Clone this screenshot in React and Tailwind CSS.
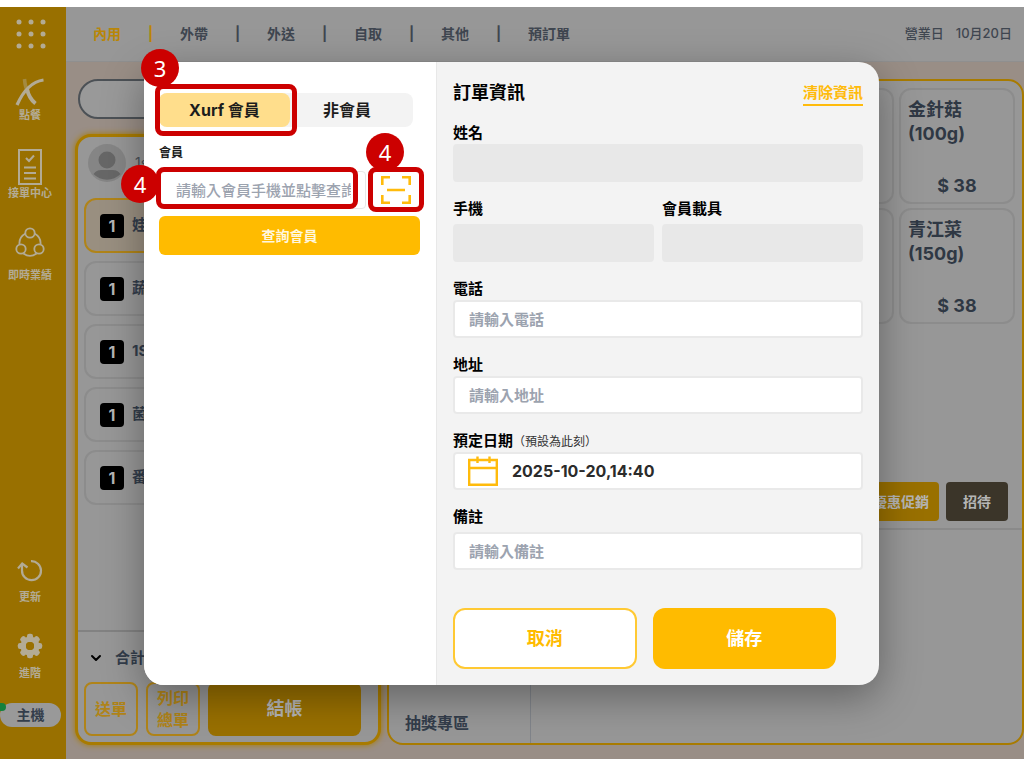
import { ChevronDown } from 'lucide-react';

const navItems = ['內用', '外帶', '外送', '自取', '其他', '預訂單'];

const cartItems = ['娃', '蔬', '1S', '菌', '番'];

const products = [
  { name: '金針菇', size: '(100g)', price: 38 },
  { name: '青江菜', size: '(150g)', price: 38 },
];

function DotsIcon() {
  const steps = [3, 15, 27];
  return (
    <svg width="30" height="30" viewBox="0 0 30 30" fill="#b3ab95">
      {steps.map((y) => steps.map((x) => <circle key={`${x}-${y}`} cx={x} cy={y} r="2.5" />))}
    </svg>
  );
}

function XLogo() {
  return (
    <svg width="30" height="30" viewBox="0 0 30 30" fill="none">
      <path d="M9.5 2C10 8 11 12 13 15" stroke="#a48a40" strokeWidth="3.6" />
      <path d="M12 12C13.500 19 16 23 20.500 26.500" stroke="#b3ab95" strokeWidth="3.800" />
      <path d="M2 28C6 19 14 5 28.500 3" stroke="#b3ab95" strokeWidth="3.200" />
    </svg>
  );
}

function ChecklistIcon() {
  return (
    <svg width="24" height="36" viewBox="0 0 24 36" fill="none" stroke="#b3ab95" strokeWidth="2">
      <rect x="1" y="1" width="22" height="34" />
      <path d="M8 9l3 3 5-5.500M6 18.500h12M6 24h12M6 29.500h12" />
    </svg>
  );
}

function PeopleIcon() {
  return (
    <svg width="30" height="30" viewBox="0 0 30 30" fill="none" stroke="#b3ab95" strokeWidth="1.8">
      <circle cx="15" cy="6" r="4.700" />
      <circle cx="6" cy="22" r="4.700" />
      <circle cx="24" cy="22" r="4.700" />
      <path d="M10.500 6.500C6 9 4 13 4.500 17.500M19.500 6.500C24 9 26 13 25.500 17.500M8.500 26.500C12.500 29.500 17.500 29.500 21.500 26.500" />
    </svg>
  );
}

function RefreshIcon() {
  return (
    <svg width="26" height="24" viewBox="0 0 26 24" fill="none" stroke="#b3ab95" strokeWidth="2.200">
      <path d="M14 2.200A9.500 9.500 0 1 1 5 11.500V5" />
      <path d="M1 9.500L5.200 4.500L10.500 8.500" />
    </svg>
  );
}

function GearIcon() {
  const teeth = [0, 45, 90, 135, 180, 225, 270, 315];
  return (
    <svg width="26" height="26" viewBox="0 0 26 26">
      <g fill="#b3ab95">
        {teeth.map((a) => (
          <rect key={a} x="10" y="0.800" width="6" height="7" rx="2.200" transform={`rotate(${a} 13 13)`} />
        ))}
      </g>
      <circle cx="13" cy="13" r="6.800" fill="none" stroke="#b3ab95" strokeWidth="5.500" />
      <circle cx="13" cy="13" r="4" fill="#997000" />
    </svg>
  );
}

function AvatarIcon() {
  return (
    <svg width="38" height="38" viewBox="0 0 38 38">
      <circle cx="19" cy="19" r="19" fill="#858585" />
      <circle cx="19" cy="16" r="8.500" fill="#676767" />
      <path d="M5.500 30C9 25 13 26 19 26s10-1 13.500 4A19 19 0 0 1 5.500 30z" fill="#676767" />
    </svg>
  );
}

function ScanIcon() {
  return (
    <svg width="30" height="28" viewBox="0 0 30 28" fill="none" stroke="#ffbb0c" strokeWidth="2.600">
      <path d="M1.300 9V1.300H9M21 1.300h7.700V9M28.700 19v7.700H21M9 26.700H1.300V19M6 14h18" />
    </svg>
  );
}

function CalendarIcon() {
  return (
    <svg width="30" height="30" viewBox="0 0 30 30" fill="none" stroke="#ffbb0c" strokeWidth="2.400">
      <path d="M1.200 4h27.600v24.800H1.200zM1.200 12h27.600M9.500 0.500v6.500M21.500 0.500v6.500" />
    </svg>
  );
}

function SideButton({ icon, label, gap = '' }) {
  return (
    <button className={'flex flex-col items-center text-[11px] leading-4 font-bold text-[#b3ab95] ' + gap}>
      {icon}
      <span>{label}</span>
    </button>
  );
}

function Sidebar() {
  return (
    <aside className="w-[66px] shrink-0 bg-[#997000] flex flex-col pt-3 pb-8">
      <button className="self-center mr-[5px]" aria-label="選單">
        <DotsIcon />
      </button>
      <nav className="mt-7 mr-[6px] flex flex-col items-center gap-[26px]">
        <SideButton icon={<XLogo />} label="點餐" />
        <SideButton icon={<ChecklistIcon />} label="接單中心" />
        <SideButton icon={<PeopleIcon />} label="即時業績" gap="gap-[10px]" />
      </nav>
      <div className="mt-auto mr-[6px] flex flex-col items-center gap-7">
        <SideButton icon={<RefreshIcon />} label="更新" gap="gap-[6px]" />
        <SideButton icon={<GearIcon />} label="進階" gap="gap-[6px]" />
      </div>
      <div className="relative mt-[22px] w-[61px] h-6 rounded-full bg-[#999] text-center text-sm leading-6 font-bold text-[#333d4b]">
        主機
        <span className="absolute left-0 top-0 w-[6px] h-2 rounded-r-full bg-[#15803d]"></span>
      </div>
    </aside>
  );
}

function TopBar() {
  return (
    <header className="h-[55px] shrink-0 bg-[#979797] border-b border-[#8f8f8f] flex items-center justify-between pl-[27px] pr-3 text-[#3f4650]">
      <nav className="flex items-center text-sm font-bold">
        {navItems.map((item, i) => (
          <div key={item} className="flex items-center">
            {i > 0 && <span className={i === 1 ? 'w-[59px] text-center text-[#b98608]' : 'w-[59px] text-center'}>|</span>}
            <button className={i === 0 ? 'text-[#b98608]' : ''}>{item}</button>
          </div>
        ))}
      </nav>
      <div className="flex gap-3 text-[13px] font-medium">
        <span>營業日</span>
        <span>10月20日</span>
      </div>
    </header>
  );
}

function OrderPanel() {
  return (
    <section className="w-[306px] shrink-0 flex flex-col">
      <input
        type="search"
        aria-label="搜尋"
        className="ml-[3px] h-[40px] rounded-full border-2 border-[#4c5156] bg-[#999]"
      />
      <div className="mt-[15px] flex-1 flex flex-col rounded-2xl border-[3px] border-[#a87b00] bg-[#979797] shadow-[0_0_6px_#a87b00]">
        <div className="flex items-center gap-[9px] pl-[10px] pt-[7px] text-sm text-[#4a4f57]">
          <AvatarIcon />
          <span>1s</span>
        </div>
        <ul className="mt-4 px-[6px] flex flex-col gap-2">
          {cartItems.map((item, i) => (
            <li
              key={item}
              className={
                'h-[55px] rounded-xl border-2 flex items-center gap-2 pl-[14px] text-[15px] font-bold text-[#333d4b] ' +
                (i === 0 ? 'border-[#b08419] bg-[#998f80]' : 'border-[#8c8c8c] bg-[#979797]')
              }
            >
              <span className="size-6 rounded bg-black text-center text-base leading-6 text-[#b5b5b5]">1</span>
              {item}
            </li>
          ))}
        </ul>
        <div className="mt-auto border-t-2 border-[#828282] px-[6px] pt-4 pb-[6px]">
          <div className="flex items-center gap-[11px] pl-1 text-[15px] leading-5 font-bold text-[#333d4b]">
            <ChevronDown size={16} strokeWidth={3} className="text-black" />
            合計
          </div>
          <div className="mt-[14px] flex gap-2 text-base font-bold text-[#b08419]">
            <button className="size-[54px] rounded-lg border-2 border-[#b08419]">送單</button>
            <button className="size-[54px] rounded-lg border-2 border-[#b08419] leading-[22px]">
              列印
              <br />
              總單
            </button>
            <button className="w-[153px] rounded-lg bg-[#997000] text-lg text-[#b5b5b5]">結帳</button>
          </div>
        </div>
      </div>
    </section>
  );
}

function MenuPanel() {
  return (
    <section className="flex-1 flex flex-col rounded-2xl border-2 border-[#a87b00] bg-[#979797]">
      <div className="flex justify-end gap-[5px] pt-[7px] pr-[7px]">
        <div className="w-[116px] flex flex-col gap-1">
          <div className="h-[116px] rounded-xl border-2 border-[#8c8c8c]"></div>
          <div className="h-[116px] rounded-xl border-2 border-[#8c8c8c]"></div>
        </div>
        <div className="w-[116px] flex flex-col gap-1">
          {products.map((p) => (
            <button
              key={p.name}
              className="h-[116px] rounded-xl border-2 border-[#8c8c8c] px-[7px] pt-2 pb-1 flex flex-col justify-between text-left text-lg leading-6 font-bold text-[#2f3844]"
            >
              <span>
                {p.name}
                <br />
                {p.size}
              </span>
              <span className="self-center">$ {p.price}</span>
            </button>
          ))}
        </div>
      </div>
      <div className="mt-auto flex justify-end gap-[7px] pr-[14px] pb-[7px] text-sm font-bold text-[#b5b5b5]">
        <button className="h-[39px] px-[10px] rounded bg-[#997000]">優惠促銷</button>
        <button className="h-[39px] w-[62px] rounded bg-[#3b3529]">招待</button>
      </div>
      <div className="h-[215px] border-t-2 border-[#8a8a8a] flex">
        <div className="w-[142px] border-r border-[#80848a] flex items-end pl-4 pb-2 text-base font-bold text-[#333d4b]">
          抽獎專區
        </div>
      </div>
    </section>
  );
}

// 步驟標示
function Step({ n, className }) {
  return (
    <span
      className={
        "absolute z-10 size-[38px] rounded-full bg-[#cc0000] text-center text-[22px] leading-[38px] font-normal text-white font-['Noto_Sans'] " +
        className
      }
    >
      {n}
    </span>
  );
}

function MemberPane() {
  return (
    <div className="w-[293px] shrink-0 bg-white rounded-l-[20px] border-r border-[#e8e8e8] pl-[15px] pr-4 pt-[31px]">
      <div className="w-[254px] h-[34px] rounded-lg bg-[#f3f3f3] flex text-base font-bold text-[#1c1c1c]">
        <div className="relative w-[131px]">
          <button className="size-full rounded-lg bg-[#ffde8c]">Xurf 會員</button>
          <span className="absolute -left-1 -right-[7px] -top-[9px] -bottom-[9px] rounded-lg border-[5px] border-[#cc0000]"></span>
          <Step n={3} className="-left-[18px] -top-[44px]" />
        </div>
        <button className="flex-1 pr-[9px]">非會員</button>
      </div>
      <label htmlFor="member" className="mt-4 block text-xs leading-5 font-bold text-[#1c1c1c]">
        會員
      </label>
      <div className="mt-2 flex justify-between">
        <div className="relative">
          <input
            id="member"
            placeholder="請輸入會員手機並點擊查詢"
            className="w-[207px] h-[38px] rounded border border-[#e8e8e8] pl-4 pr-[14px] text-[15px] font-medium placeholder:text-[#9ca3af]"
          />
          <span className="absolute -left-[3px] right-2 -top-1 bottom-0 rounded-lg border-[5px] border-[#cc0000]"></span>
          <Step n={4} className="-left-[38px] -top-[6px]" />
        </div>
        <div className="relative">
          <button aria-label="掃描" className="w-[48px] h-[38px] flex items-center justify-center">
            <ScanIcon />
          </button>
          <span className="absolute -left-1 -right-1 -top-1 -bottom-[3px] rounded-lg border-[5px] border-[#cc0000]"></span>
          <Step n={4} className="-left-[6px] -top-[38px]" />
        </div>
      </div>
      <button className="mt-[7px] w-full h-[39px] rounded-md bg-[#ffbb00] text-sm font-bold text-[#fff7df]">
        查詢會員
      </button>
    </div>
  );
}

const labelClass = 'block text-[15px] leading-[22px] font-bold text-black';
const inputClass =
  'block w-full h-[38px] rounded border-2 border-[#e9e9e9] bg-white px-[14px] text-[15px] font-bold placeholder:text-[#9ca3af]';
const disabledClass = 'block w-full h-[38px] rounded bg-[#e8e8e8]';

function OrderForm() {
  return (
    <form className="flex-1 min-w-0 px-4 pt-5 pb-4">
      <div className="flex items-start justify-between">
        <h2 className="text-lg leading-[22px] font-bold text-black">訂單資訊</h2>
        <button type="button" className="border-b-2 border-[#ffbb0c] text-[15px] leading-[22px] font-bold text-[#ffbb0c]">
          清除資訊
        </button>
      </div>
      <div className="mt-4 flex flex-col gap-4">
        <div>
          <label htmlFor="name" className={labelClass}>姓名</label>
          <input id="name" disabled className={disabledClass} />
        </div>
        <div className="grid grid-cols-2 gap-2">
          <div>
            <label htmlFor="mobile" className={labelClass}>手機</label>
            <input id="mobile" disabled className={'mt-1 ' + disabledClass} />
          </div>
          <div>
            <label htmlFor="carrier" className={labelClass}>會員載具</label>
            <input id="carrier" disabled className={'mt-1 ' + disabledClass} />
          </div>
        </div>
        <div>
          <label htmlFor="phone" className={labelClass}>電話</label>
          <input id="phone" placeholder="請輸入電話" className={inputClass} />
        </div>
        <div>
          <label htmlFor="address" className={labelClass}>地址</label>
          <input id="address" placeholder="請輸入地址" className={inputClass} />
        </div>
        <div>
          <label htmlFor="date" className={labelClass}>
            預定日期<span className="text-xs font-normal text-[#333]">（預設為此刻）</span>
          </label>
          <div className="h-[38px] rounded border-2 border-[#e9e9e9] bg-white flex items-center gap-[14px] pl-[13px]">
            <CalendarIcon />
            <input
              id="date"
              defaultValue="2025-10-20,14:40"
              className="flex-1 min-w-0 text-base font-bold text-[#2b2b2b]"
            />
          </div>
        </div>
        <div>
          <label htmlFor="note" className={labelClass}>備註</label>
          <input id="note" placeholder="請輸入備註" className={'mt-1 ' + inputClass} />
        </div>
      </div>
      <div className="mt-[38px] mr-[27px] grid grid-cols-2 gap-4 text-lg font-bold">
        <button type="button" className="h-[61px] rounded-xl border-2 border-[#ffc933] bg-white text-[#ffbb00]">
          取消
        </button>
        <button type="button" className="h-[61px] rounded-xl bg-[#ffbb00] text-white">
          儲存
        </button>
      </div>
    </form>
  );
}

export default function App() {
  return (
    <div className="min-h-screen bg-white pt-[7px] pb-[9px] flex flex-col font-['Inter','Noto_Sans_CJK_TC',sans-serif]">
      <div className="flex-1 flex">
        <Sidebar />
        <div className="flex-1 min-w-0 flex flex-col bg-[#998e86]">
          <TopBar />
          <main className="flex-1 flex gap-[6px] pl-[9px] pt-[17px] pb-[14px]">
            <OrderPanel />
            <MenuPanel />
          </main>
        </div>
      </div>
      <div className="absolute inset-x-0 top-[62px] pr-px flex justify-center">
        <div
          role="dialog"
          aria-label="訂單資訊"
          className="w-[735px] max-w-full flex rounded-[20px] bg-[#f3f3f3] shadow-[0_12px_40px_rgba(0,0,0,0.35)]"
        >
          <MemberPane />
          <OrderForm />
        </div>
      </div>
    </div>
  );
}
